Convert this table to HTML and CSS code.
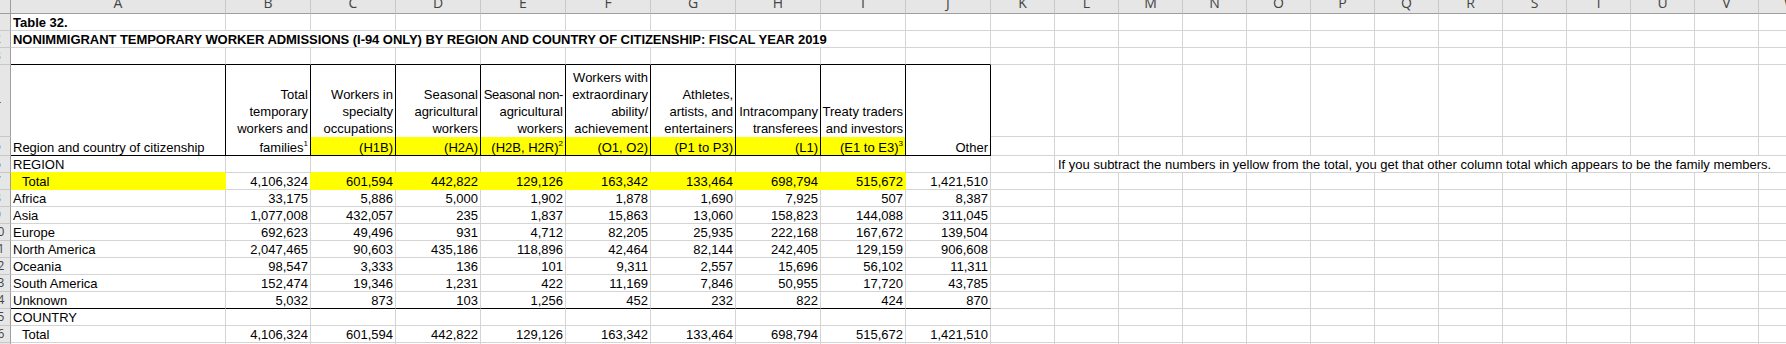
FILE: index.html
```html
<!DOCTYPE html>
<html lang="en">
<head>
  <meta charset="UTF-8">
  <title>Table 32 - Nonimmigrant temporary worker admissions</title>
  <link rel="stylesheet" href="styles.css">
</head>
<body>
  <div class="sheet">
    <!-- column letters -->
    <div class="row h0">
      <div class="corner"></div>
      <div class="ch">A</div><div class="ch">B</div><div class="ch">C</div><div class="ch">D</div>
      <div class="ch">E</div><div class="ch">F</div><div class="ch">G</div><div class="ch">H</div>
      <div class="ch">I</div><div class="ch">J</div><div class="ch">K</div><div class="ch">L</div>
      <div class="ch">M</div><div class="ch">N</div><div class="ch">O</div><div class="ch">P</div>
      <div class="ch">Q</div><div class="ch">R</div><div class="ch">S</div><div class="ch">T</div>
      <div class="ch">U</div><div class="ch">V</div><div class="ch">W</div>
    </div>

    <div class="row">
      <div class="rh"><span>1</span></div>
      <div class="bold">Table 32.</div>
      <div></div><div></div><div></div><div></div><div></div><div></div><div></div><div></div><div></div>
      <div class="fill"></div>
    </div>

    <div class="row">
      <div class="rh"><span>2</span></div>
      <div class="bold title">NONIMMIGRANT TEMPORARY WORKER ADMISSIONS (I-94 ONLY) BY REGION AND COUNTRY OF CITIZENSHIP: FISCAL YEAR 2019</div>
      <div></div>
      <div class="fill"></div>
    </div>

    <div class="row">
      <div class="rh"><span>3</span></div>
      <div class="bb"></div><div class="bb"></div><div class="bb"></div><div class="bb"></div><div class="bb"></div>
      <div class="bb"></div><div class="bb"></div><div class="bb"></div><div class="bb"></div><div class="bb"></div>
      <div class="fill"></div>
    </div>

    <!-- table header, two rows -->
    <div class="row h4">
      <div class="rh"><span>4</span></div>
      <div class="hd"></div>
      <div class="hd n"><span>Total<br>temporary<br>workers and</span></div>
      <div class="hd n"><span>Workers in<br>specialty<br>occupations</span></div>
      <div class="hd n"><span>Seasonal<br>agricultural<br>workers</span></div>
      <div class="hd n"><span><span class="tight">Seasonal non-</span><br>agricultural<br>workers</span></div>
      <div class="hd n"><span>Workers with<br>extraordinary<br>ability/<br>achievement</span></div>
      <div class="hd n"><span>Athletes,<br>artists, and<br>entertainers</span></div>
      <div class="hd n"><span>Intracompany<br>transferees</span></div>
      <div class="hd n"><span>Treaty traders<br>and investors</span></div>
      <div class="hd"></div>
      <div class="fill"></div>
    </div>

    <div class="row h5">
      <div class="rh"><span>5</span></div>
      <div class="hd2">Region and country of citizenship</div>
      <div class="hd2 n"><span>families<sup>1</sup></span></div>
      <div class="y hd2 n">(H1B)</div>
      <div class="y hd2 n">(H2A)</div>
      <div class="y hd2 n"><span>(H2B, H2R)<sup>2</sup></span></div>
      <div class="y hd2 n">(O1, O2)</div>
      <div class="y hd2 n">(P1 to P3)</div>
      <div class="y hd2 n">(L1)</div>
      <div class="y hd2 n"><span>(E1 to E3)<sup>3</sup></span></div>
      <div class="hd2 n">Other</div>
      <div class="fill"></div>
    </div>

    <div class="row">
      <div class="rh"><span>6</span></div>
      <div class="ya">REGION</div>
      <div></div>
      <div class="ya"></div><div class="ya"></div><div class="ya"></div><div class="ya"></div>
      <div class="ya"></div><div class="ya"></div><div class="ya"></div>
      <div></div>
      <div></div>
      <div class="note">If you subtract the numbers in yellow from the total, you get that other column total which appears to be the family members.</div>
    </div>

    <div class="row">
      <div class="rh"><span>7</span></div>
      <div class="y ind">Total</div>
      <div class="n yr">4,106,324</div>
      <div class="y n">601,594</div><div class="y n">442,822</div><div class="y n">129,126</div>
      <div class="y n">163,342</div><div class="y n">133,464</div><div class="y n">698,794</div>
      <div class="y n">515,672</div>
      <div class="n">1,421,510</div>
      <div class="fill"></div>
    </div>

    <div class="row">
      <div class="rh"><span>8</span></div>
      <div>Africa</div>
      <div class="n">33,175</div><div class="n">5,886</div><div class="n">5,000</div><div class="n">1,902</div>
      <div class="n">1,878</div><div class="n">1,690</div><div class="n">7,925</div><div class="n">507</div>
      <div class="n">8,387</div>
      <div class="fill"></div>
    </div>

    <div class="row">
      <div class="rh"><span>9</span></div>
      <div>Asia</div>
      <div class="n">1,077,008</div><div class="n">432,057</div><div class="n">235</div><div class="n">1,837</div>
      <div class="n">15,863</div><div class="n">13,060</div><div class="n">158,823</div><div class="n">144,088</div>
      <div class="n">311,045</div>
      <div class="fill"></div>
    </div>

    <div class="row">
      <div class="rh"><span>10</span></div>
      <div>Europe</div>
      <div class="n">692,623</div><div class="n">49,496</div><div class="n">931</div><div class="n">4,712</div>
      <div class="n">82,205</div><div class="n">25,935</div><div class="n">222,168</div><div class="n">167,672</div>
      <div class="n">139,504</div>
      <div class="fill"></div>
    </div>

    <div class="row">
      <div class="rh"><span>11</span></div>
      <div>North America</div>
      <div class="n">2,047,465</div><div class="n">90,603</div><div class="n">435,186</div><div class="n">118,896</div>
      <div class="n">42,464</div><div class="n">82,144</div><div class="n">242,405</div><div class="n">129,159</div>
      <div class="n">906,608</div>
      <div class="fill"></div>
    </div>

    <div class="row">
      <div class="rh"><span>12</span></div>
      <div>Oceania</div>
      <div class="n">98,547</div><div class="n">3,333</div><div class="n">136</div><div class="n">101</div>
      <div class="n">9,311</div><div class="n">2,557</div><div class="n">15,696</div><div class="n">56,102</div>
      <div class="n">11,311</div>
      <div class="fill"></div>
    </div>

    <div class="row">
      <div class="rh"><span>13</span></div>
      <div>South America</div>
      <div class="n">152,474</div><div class="n">19,346</div><div class="n">1,231</div><div class="n">422</div>
      <div class="n">11,169</div><div class="n">7,846</div><div class="n">50,955</div><div class="n">17,720</div>
      <div class="n">43,785</div>
      <div class="fill"></div>
    </div>

    <div class="row">
      <div class="rh"><span>14</span></div>
      <div class="bb">Unknown</div>
      <div class="n bb">5,032</div><div class="n bb">873</div><div class="n bb">103</div><div class="n bb">1,256</div>
      <div class="n bb">452</div><div class="n bb">232</div><div class="n bb">822</div><div class="n bb">424</div>
      <div class="n bb">870</div>
      <div class="fill"></div>
    </div>

    <div class="row">
      <div class="rh"><span>15</span></div>
      <div>COUNTRY</div>
      <div></div><div></div><div></div><div></div><div></div><div></div><div></div><div></div><div></div>
      <div class="fill"></div>
    </div>

    <div class="row">
      <div class="rh"><span>16</span></div>
      <div class="ind">Total</div>
      <div class="n">4,106,324</div><div class="n">601,594</div><div class="n">442,822</div><div class="n">129,126</div>
      <div class="n">163,342</div><div class="n">133,464</div><div class="n">698,794</div><div class="n">515,672</div>
      <div class="n">1,421,510</div>
      <div class="fill"></div>
    </div>

    <div class="row">
      <div class="rh"><span>17</span></div>
      <div></div>
      <div></div><div></div><div></div><div></div><div></div><div></div><div></div><div></div><div></div>
      <div class="fill"></div>
    </div>
  </div>
</body>
</html>
```

FILE: styles.css
```css
html,
body {
  margin: 0;
  overflow: hidden;
  background-color: #fff;
}

body {
  font-family: "Liberation Sans", Arial, sans-serif;
  font-size: 13px;
  color: #000;
}

.sheet {
  width: 1823px;
}

/* one spreadsheet row: row number, A, B..J, K..W */
.row {
  display: grid;
  grid-template-columns: 11px 215px repeat(9, 85px) repeat(13, 64px);
  height: 17px;
}

.row.h0 { height: 14px; }
.row.h4 { height: 72px; }
.row.h5 { height: 19px; }

.row > div {
  box-sizing: border-box;
  min-width: 0;
  display: flex;
  align-items: flex-end;
  padding: 0 2px;
  line-height: 14px;
  white-space: nowrap;
  border-right: 1px solid #d4d4d4;
  border-bottom: 1px solid #d4d4d4;
}

.row > .n {
  justify-content: flex-end;
  text-align: right;
}

.bold {
  font-weight: bold;
}

.row > .title {
  grid-column: 2 / 11;
  letter-spacing: -0.05px;
}

.row > .ind {
  padding-left: 11px;
}

.tight {
  letter-spacing: -0.35px;
}

/* empty columns K and beyond */
.row > .fill {
  grid-column: 12 / -1;
  border-right: 0;
  background: repeating-linear-gradient(to right, transparent 0 63px, #d4d4d4 63px 64px);
}

.row > .note {
  grid-column: 13 / -1;
  border-right: 0;
  padding-left: 3px;
}

/* headers of the sheet */
.row > .corner {
  background-color: #e6e6e6;
  border-right-color: #9e9e9e;
  border-bottom-color: #9e9e9e;
}

.row > .ch {
  background-color: #e6e6e6;
  border-right-color: #c8c8c8;
  border-bottom-color: #9e9e9e;
  justify-content: center;
  padding-bottom: 3px;
  overflow: hidden;
  font-family: "Open Sans", sans-serif;
  font-size: 14px;
  color: #444;
}

.row > .rh {
  background-color: #e6e6e6;
  border-right-color: #9e9e9e;
  border-bottom-color: #c8c8c8;
  align-items: center;
  padding: 0;
  overflow: hidden;
}

.rh span {
  flex: none;
  width: 25px;
  margin-left: -15px;
  text-align: center;
  font-family: "Open Sans", sans-serif;
  font-size: 12px;
  line-height: 16px;
  color: #444;
}

/* yellow cells */
.row > .y {
  background-color: #ffff00;
  border-right-color: #ffff00;
  border-bottom-color: #ffff00;
}

.row > .ya { border-bottom-color: #ffff00; }
.row > .yr { border-right-color: #ffff00; }

/* black borders of the table */
.row > .bb {
  border-bottom-color: #000;
}

.row > .hd {
  background-color: #fff;
  border-right-color: #000;
  border-bottom: 0;
  line-height: 17px;
}

.row > .hd2 {
  border-right-color: #000;
  border-bottom-color: #000;
}

.row > .hd2:not(.y) {
  background-color: #fff;
}

sup {
  font-size: 8px;
  line-height: 0;
  vertical-align: 6px;
}
```
